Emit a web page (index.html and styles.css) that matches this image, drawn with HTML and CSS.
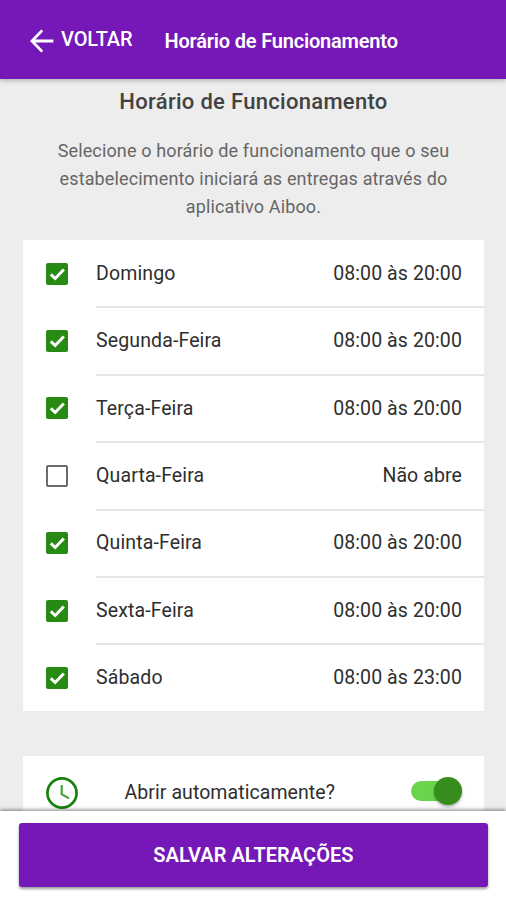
FILE: index.html
```html
<!DOCTYPE html>
<html lang="pt-BR">
<head>
<meta charset="utf-8">
<meta name="viewport" content="width=device-width, initial-scale=1">
<title>Horário de Funcionamento</title>
<link rel="stylesheet" href="styles.css">
</head>
<body>
<div class="app">
  <header class="toolbar">
    <button class="back">
      <svg class="back-icon" viewBox="0 0 24 24"><path d="M12.2 1.4 2 12l10.2 10.6M2.2 12H23.4"/></svg>
      <span class="back-label">VOLTAR</span>
    </button>
    <div class="toolbar-title">Horário de Funcionamento</div>
  </header>
  <main class="content">
    <h1 class="heading">Horário de Funcionamento</h1>
    <p class="intro">Selecione o horário de funcionamento que o seu<br>estabelecimento iniciará as entregas através do<br>aplicativo Aiboo.</p>
    <div class="card">
      <div class="row"><span class="box checked"><svg viewBox="0 0 22 22"><path d="M4.8 11.3 9.2 15.5 17.8 6.5"/></svg></span><div class="line"><span class="day">Domingo</span><span class="time">08:00 às 20:00</span></div></div>
      <div class="row"><span class="box checked"><svg viewBox="0 0 22 22"><path d="M4.8 11.3 9.2 15.5 17.8 6.5"/></svg></span><div class="line"><span class="day">Segunda-Feira</span><span class="time">08:00 às 20:00</span></div></div>
      <div class="row"><span class="box checked"><svg viewBox="0 0 22 22"><path d="M4.8 11.3 9.2 15.5 17.8 6.5"/></svg></span><div class="line"><span class="day">Terça-Feira</span><span class="time">08:00 às 20:00</span></div></div>
      <div class="row"><span class="box"></span><div class="line"><span class="day">Quarta-Feira</span><span class="time">Não abre</span></div></div>
      <div class="row"><span class="box checked"><svg viewBox="0 0 22 22"><path d="M4.8 11.3 9.2 15.5 17.8 6.5"/></svg></span><div class="line"><span class="day">Quinta-Feira</span><span class="time">08:00 às 20:00</span></div></div>
      <div class="row"><span class="box checked"><svg viewBox="0 0 22 22"><path d="M4.8 11.3 9.2 15.5 17.8 6.5"/></svg></span><div class="line"><span class="day">Sexta-Feira</span><span class="time">08:00 às 20:00</span></div></div>
      <div class="row"><span class="box checked"><svg viewBox="0 0 22 22"><path d="M4.8 11.3 9.2 15.5 17.8 6.5"/></svg></span><div class="line"><span class="day">Sábado</span><span class="time">08:00 às 23:00</span></div></div>
    </div>
    <div class="card auto">
      <svg class="clock" viewBox="0 0 32 32"><circle cx="16" cy="16" r="14.6"/><path d="M15.7 8v9.2l7.2 4.2"/></svg>
      <span class="auto-label">Abrir automaticamente?</span>
      <span class="toggle"><span class="knob"></span></span>
    </div>
  </main>
  <footer class="footer">
    <button class="save">SALVAR ALTERAÇÕES</button>
  </footer>
</div>
</body>
</html>
```

FILE: styles.css
```css
* { box-sizing: border-box; }
body { margin: 0; font-family: Roboto, "Liberation Sans", sans-serif; background: #ededed; }
button { border: 0; padding: 0; font-family: inherit; cursor: pointer; }

.app { height: 900px; display: flex; flex-direction: column; overflow: hidden; }

.toolbar {
  flex: none;
  height: 79px;
  padding: 3px 0 0 30px;
  display: flex;
  align-items: center;
  background: #7518b7;
  color: #fff;
  box-shadow: 0 1px 5px rgba(0, 0, 0, .3);
  z-index: 1;
}
.back { width: 134.5px; display: flex; align-items: center; gap: 7px; background: none; color: inherit; }
.back-icon { width: 24px; height: 24px; fill: none; stroke: #fff; stroke-width: 2.8; }
.back-label { font-size: 20px; font-weight: 500; line-height: 24px; padding-bottom: 4px; letter-spacing: -.1px; }
.toolbar-title { font-size: 20px; font-weight: 600; line-height: 24px; letter-spacing: -.19px; white-space: nowrap; }

.content { flex: 1; min-height: 0; padding: 9px 22px 0 23px; overflow: hidden; }
.heading { margin: 0; text-align: center; font-size: 22px; font-weight: 500; line-height: 28px; letter-spacing: .3px; color: #424242; }
.intro { margin: 21px 0 0; text-align: center; font-size: 18px; line-height: 28px; color: #666; letter-spacing: .14px; white-space: nowrap; }

.card { margin-top: 19px; background: #fff; color: #2e2e2e; }
.row { height: 67.4px; padding-left: 23px; display: flex; align-items: center; }
.row:last-child { height: 66.6px; }
.box { flex: none; width: 22px; height: 22px; border: 2px solid #6b6b6b; border-radius: 2px; }
.box.checked { border: 0; background: #278a13; }
.box svg { display: block; width: 22px; height: 22px; fill: none; stroke: #fff; stroke-width: 3; }
.line {
  flex: 1;
  height: 100%;
  margin-left: 28px;
  padding: 0 22px .6px 0;
  display: flex;
  align-items: center;
  justify-content: space-between;
  box-shadow: 0 1px 0 #e6e6e6, inset 0 -1px 0 #e6e6e6;
  font-size: 19.5px;
  white-space: nowrap;
}
.row:last-child .line { box-shadow: none; }
.day { letter-spacing: .13px; }
.time { letter-spacing: .1px; }

.auto { height: 80px; margin-top: 45px; padding: 0 22px 9px 23px; display: flex; align-items: center; }
.clock { flex: none; width: 32px; height: 32px; margin-top: 4px; fill: none; stroke: #16830f; stroke-width: 2.7; }
.clock path { stroke-width: 2.2; stroke: #48a03f; }
.auto-label { flex: 1; margin-left: 46.5px; padding-top: 2px; font-size: 19.5px; letter-spacing: .07px; }
.toggle { width: 51px; height: 20px; border-radius: 10px; background: #6ad44d; display: flex; align-items: center; justify-content: flex-end; }
.knob { width: 28px; height: 28px; border-radius: 50%; background: #368c1d; box-shadow: 0 2px 3px rgba(0, 0, 0, .3); }

.footer { flex: none; height: 89px; padding: 12px 18px 0 19px; background: #fff; box-shadow: 0 -1px 4px rgba(0, 0, 0, .5); z-index: 1; }
.save { display: block; width: 100%; height: 64px; border-radius: 3px; background: #7518b7; color: #fff; font-size: 20px; font-weight: 600; letter-spacing: .05px; box-shadow: 0 2px 3px rgba(0, 0, 0, .4); }
```
